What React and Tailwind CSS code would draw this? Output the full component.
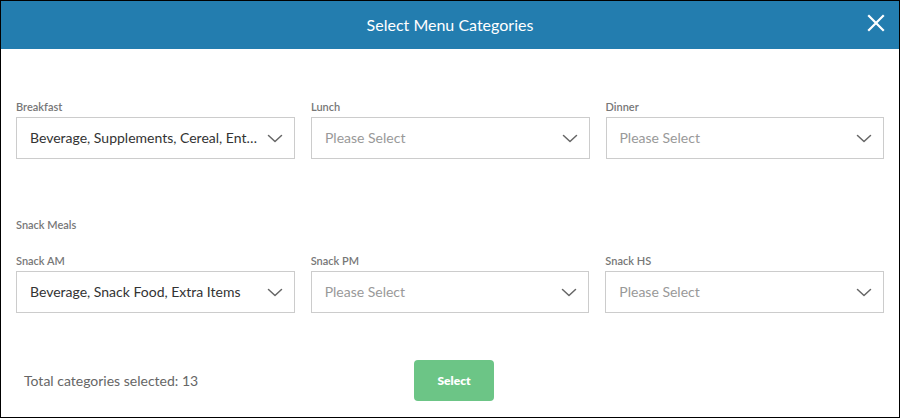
import React from "react";

const Chevron = () => (
  <svg width="16" height="9" viewBox="0 0 16 9" fill="none" className="shrink-0">
    <polyline points="1.5,1.5 8,7.5 14.5,1.5" stroke="#666" strokeWidth="1.5" strokeLinecap="round" strokeLinejoin="round" />
  </svg>
);

const SelectField = ({ label, value }) => (
  <div className="flex flex-col w-[279px]">
    <label className="text-[11px] leading-[14px] text-[#777] font-semibold mb-[3px]">{label}</label>
    <div className="h-[42px] border border-[#ccc] bg-white flex items-center pl-[13px] pr-[11px] gap-2">
      <span className={"flex-1 truncate text-[14px] leading-[20px] " + (value ? "text-[#333]" : "text-[#999]")}>
        {value || "Please Select"}
      </span>
      <Chevron />
    </div>
  </div>
);

export default function App() {
  return (
    <div className="w-[900px] h-[418px] border border-black bg-white flex flex-col" style={{ fontFamily: "Lato, 'Open Sans', sans-serif" }}>
      <div className="h-[48px] bg-[#237daf] flex items-center justify-center relative shrink-0">
        <h1 className="text-white text-[16px]">Select Menu Categories</h1>
        <button className="absolute right-[14px] top-[13px] text-white">
          <svg width="18" height="18" viewBox="0 0 18 18" fill="none">
            <path d="M2 2 L16 16 M16 2 L2 16" stroke="white" strokeWidth="2.2" strokeLinecap="square" />
          </svg>
        </button>
      </div>

      <div className="px-[15px] pt-[51px]">
        <div className="flex gap-[16px]">
          <SelectField label="Breakfast" value="Beverage, Supplements, Cereal, Entrees, Extra Items" />
          <SelectField label="Lunch" />
          <SelectField label="Dinner" />
        </div>

        <div className="text-[11px] leading-[14px] text-[#777] font-semibold mt-[59px]">Snack Meals</div>

        <div className="flex gap-[16px] mt-[22px]">
          <SelectField label="Snack AM" value="Beverage, Snack Food, Extra Items" />
          <SelectField label="Snack PM" />
          <SelectField label="Snack HS" />
        </div>
      </div>

      <div className="flex items-center pl-[23px] mt-[47px]">
        <span className="w-[390px] text-[14px] text-[#666]">Total categories selected: 13</span>
        <button className="w-[80px] h-[41px] rounded-[4px] bg-[#6cc586] text-white text-[12px] font-extrabold">Select</button>
      </div>
    </div>
  );
}
